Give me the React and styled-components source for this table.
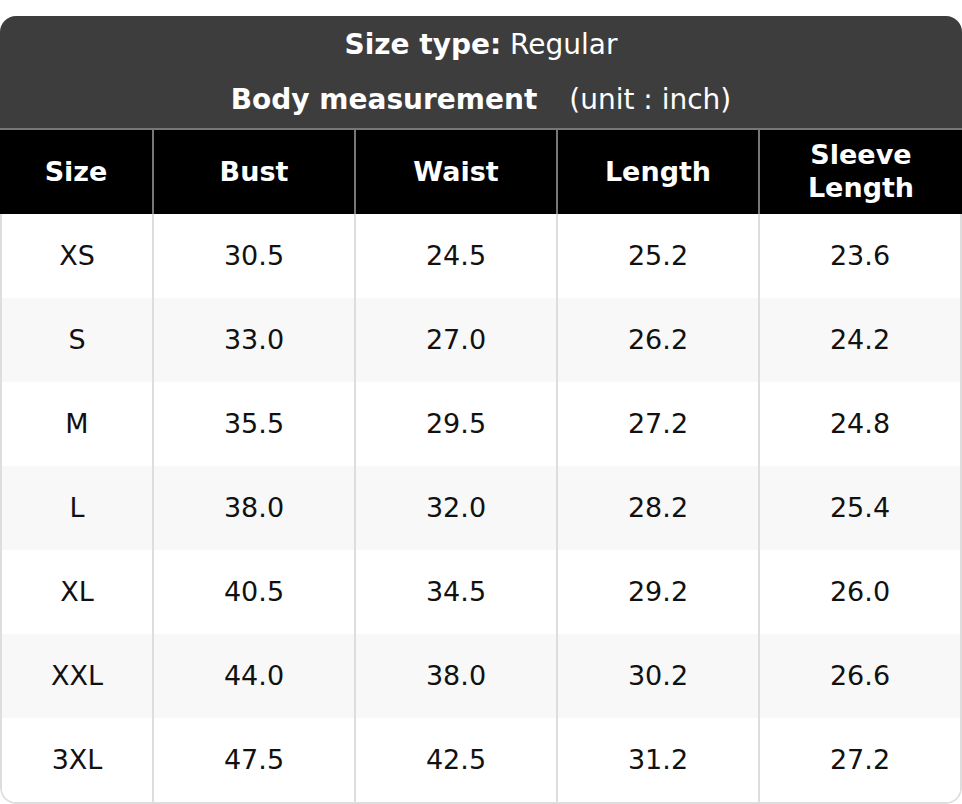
import React from 'react';
import styled, { createGlobalStyle } from 'styled-components';

const GlobalStyle = createGlobalStyle`
  body {
    margin: 0;
    background: #fff;
    font-family: "DejaVu Sans", "Liberation Sans", sans-serif;
  }
`;

const Card = styled.div`
  margin-top: 16px;
  width: 962px;
  border-radius: 16px;
  overflow: hidden;
  background: #fff;
`;

const Title = styled.div`
  height: 112px;
  box-sizing: border-box;
  padding-top: 11px;
  background: #3d3d3d;
  color: #fff;
  display: flex;
  flex-direction: column;
  align-items: center;
  gap: 19px;
  font-size: 28px;
  line-height: 36px;
`;

const TitleLine = styled.div`
  white-space: nowrap;
`;

const Bold = styled.span`
  font-weight: 700;
`;

const Unit = styled.span`
  margin-left: 32px;
`;

const Row = styled.div`
  display: grid;
  grid-template-columns: ${(p) => p.$first}px 202px 202px 202px 1fr;
  height: 84px;
  background: ${(p) => (p.$striped ? '#f8f8f8' : '#fff')};
`;

const HeadRow = styled(Row)`
  background: #000;
  border-top: 2px solid #777;
`;

const HeadCell = styled.div`
  display: flex;
  align-items: center;
  justify-content: center;
  text-align: center;
  padding-bottom: 2px;
  color: #fff;
  font-weight: 700;
  font-size: 27px;
  line-height: 33px;
  box-sizing: border-box;
  & + & {
    border-left: 2px solid #777;
  }
`;

const Body = styled.div`
  border: 2px solid #ddd;
  border-top: none;
  border-radius: 0 0 16px 16px;
  overflow: hidden;
`;

const Cell = styled.div`
  display: flex;
  align-items: center;
  justify-content: center;
  padding-bottom: 2px;
  color: #111;
  font-size: 27px;
  box-sizing: border-box;
  & + & {
    border-left: 2px solid #ddd;
  }
`;

const columns = ['Size', 'Bust', 'Waist', 'Length', 'Sleeve\nLength'];

const rows = [
  ['XS', '30.5', '24.5', '25.2', '23.6'],
  ['S', '33.0', '27.0', '26.2', '24.2'],
  ['M', '35.5', '29.5', '27.2', '24.8'],
  ['L', '38.0', '32.0', '28.2', '25.4'],
  ['XL', '40.5', '34.5', '29.2', '26.0'],
  ['XXL', '44.0', '38.0', '30.2', '26.6'],
  ['3XL', '47.5', '42.5', '31.2', '27.2'],
];

export default function App() {
  return (
    <>
      <GlobalStyle />
      <Card>
        <Title>
          <TitleLine>
            <Bold>Size type:</Bold> Regular
          </TitleLine>
          <TitleLine>
            <Bold>Body measurement</Bold>
            <Unit>(unit : inch)</Unit>
          </TitleLine>
        </Title>
        <HeadRow $first={152}>
          {columns.map((c) => (
            <HeadCell key={c}>
              {c.split('\n').map((part, i) => (
                <React.Fragment key={i}>
                  {i > 0 && <br />}
                  {part}
                </React.Fragment>
              ))}
            </HeadCell>
          ))}
        </HeadRow>
        <Body>
          {rows.map((r, i) => (
            <Row key={r[0]} $first={150} $striped={i % 2 === 1}>
              {r.map((v, j) => (
                <Cell key={j}>{v}</Cell>
              ))}
            </Row>
          ))}
        </Body>
      </Card>
    </>
  );
}
